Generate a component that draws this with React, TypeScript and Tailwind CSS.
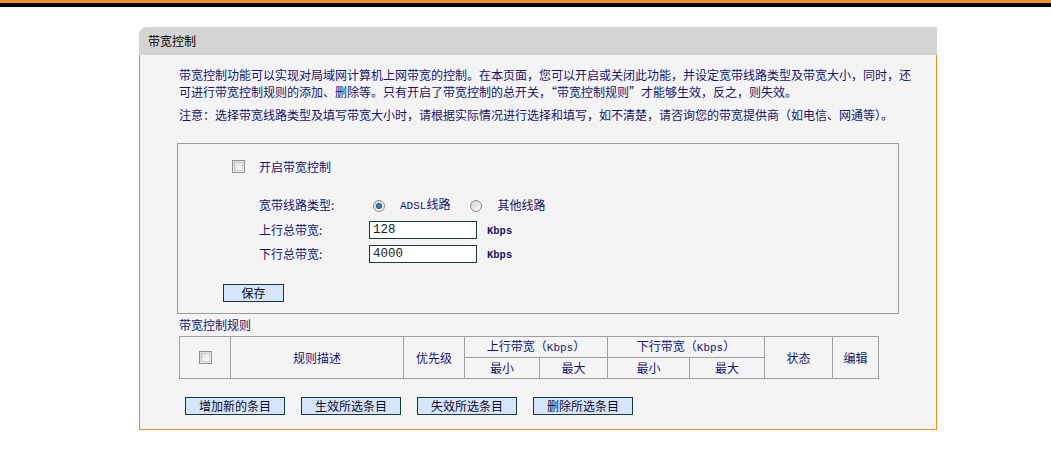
import type { ReactNode } from 'react';

const cjk = { fontFamily: '"Noto Sans CJK SC", "Noto Sans", sans-serif' };
const mono = { fontFamily: '"Liberation Mono", "DejaVu Sans Mono", monospace' };

function Checkbox() {
	return (
		<span className="box-border inline-block h-[13px] w-[13px] border border-[#8f8f8f] bg-gradient-to-br from-[#d8d8d8] to-[#fafafa] p-[1px]">
			<span className="block h-full w-full border border-[#c9c9c9] bg-gradient-to-br from-[#dcdcdc] to-white" />
		</span>
	);
}

function Radio({ checked = false }: { checked?: boolean }) {
	return (
		<span className="box-border inline-flex h-[12px] w-[12px] items-center justify-center rounded-full border border-[#8c8c8c] bg-gradient-to-br from-[#d4d4d4] to-[#fbfbfb]">
			{checked ? (
				<span className="block h-[6px] w-[6px] rounded-full border border-[#0d3c66] bg-[#2f8fd6]" />
			) : null}
		</span>
	);
}

function Btn({ children, className = '' }: { children: ReactNode; className?: string }) {
	return (
		<button
			type="button"
			className={`box-border flex h-[18px] items-center justify-center border border-[#18393a] bg-[#d6e5fa] text-[12px] leading-none text-[#0a0a2a] ${className}`}
		>
			{children}
		</button>
	);
}

function Kbps() {
	return (
		<span className="ml-[10px] mt-[3px] text-[10.5px] font-bold text-[#141460]" style={mono}>
			Kbps
		</span>
	);
}

function Th({
	children,
	className = '',
	rowSpan,
	colSpan,
}: {
	children?: ReactNode;
	className?: string;
	rowSpan?: number;
	colSpan?: number;
}) {
	return (
		<td
			rowSpan={rowSpan}
			colSpan={colSpan}
			className={`h-[21px] border border-[#a0a0a0] p-0 text-center align-middle text-[12px] font-normal leading-none text-[#141470] ${className}`}
		>
			{children}
		</td>
	);
}

export default function App() {
	return (
		<div className="min-h-[471px] bg-white" style={cjk}>
			<div className="h-[3px] bg-[#f0952c]" />
			<div className="h-[4px] bg-black" />

			<div className="ml-[139px] mt-[20px] w-[798px]">
				<div className="flex h-[28px] items-center rounded-tl-[8px] bg-[#d4d4d4] pl-[9px] text-[12px] text-black">
					带宽控制
				</div>

				<div className="border-x border-b border-[#ef8e1c] bg-[#f4f4f4] pb-[14px] pl-[37px] pt-[11px]">
					<div className="ml-[2px] whitespace-nowrap text-[12px] leading-[17px] text-[#14146e]">
						<p>
							带宽控制功能可以实现对局域网计算机上网带宽的控制。在本页面，您可以开启或关闭此功能，并设定宽带线路类型及带宽大小，同时，还
							<br />
							可进行带宽控制规则的添加、删除等。只有开启了带宽控制的总开关，“带宽控制规则”才能够生效，反之，则失效。
						</p>
						<p className="mt-[6px]">
							注意：选择带宽线路类型及填写带宽大小时，请根据实际情况进行选择和填写，如不清楚，请咨询您的带宽提供商（如电信、网通等）。
						</p>
					</div>

					{/* settings box */}
					<div className="mt-[20px] box-border w-[722px] border border-[#9c9c9c] pb-[11px] pt-[16px] text-[12px] text-[#14146e]">
						<div className="ml-[54px] flex h-[13px] items-center">
							<Checkbox />
							<span className="ml-[14px] leading-none">开启带宽控制</span>
						</div>

						<div className="ml-[81px] mt-[23px] flex h-[17px] items-center">
							<span className="w-[110px]">宽带线路类型:</span>
							<span className="ml-[4px] mt-[2px] flex">
								<Radio checked />
							</span>
							<span className="ml-[15px]">
								<span className="text-[11px]" style={mono}>
									ADSL
								</span>
								线路
							</span>
							<span className="ml-[20px] mt-[2px] flex">
								<Radio />
							</span>
							<span className="ml-[15px]">其他线路</span>
						</div>

						<div className="ml-[81px] mt-[8px] flex h-[18px] items-center">
							<span className="w-[110px]">上行总带宽:</span>
							<input
								readOnly
								value="128"
								className="box-border h-[18px] w-[108px] border border-[#183a38] bg-white px-[3px] text-[12.5px] text-[#222] outline-none"
								style={mono}
							/>
							<Kbps />
						</div>

						<div className="ml-[81px] mt-[6px] flex h-[18px] items-center">
							<span className="w-[110px]">下行总带宽:</span>
							<input
								readOnly
								value="4000"
								className="box-border h-[18px] w-[108px] border border-[#183a38] bg-white px-[3px] text-[12.5px] text-[#222] outline-none"
								style={mono}
							/>
							<Kbps />
						</div>

						<div className="ml-[45px] mt-[21px]">
							<Btn className="w-[61px]">保存</Btn>
						</div>
					</div>

					<div className="ml-[2px] mt-[2px] text-[12px] leading-[17px] text-[#14146e]">带宽控制规则</div>

					<table className="ml-[2px] mt-[3px] w-[700px] table-fixed border-collapse">
						<colgroup>
							<col className="w-[51px]" />
							<col className="w-[173px]" />
							<col className="w-[61px]" />
							<col className="w-[75px]" />
							<col className="w-[68px]" />
							<col className="w-[82px]" />
							<col className="w-[75px]" />
							<col className="w-[68px]" />
							<col className="w-[46px]" />
						</colgroup>
						<tbody>
							<tr>
								<Th rowSpan={2}>
									<span className="inline-flex">
										<Checkbox />
									</span>
								</Th>
								<Th rowSpan={2}>规则描述</Th>
								<Th rowSpan={2}>优先级</Th>
								<Th colSpan={2}>
									上行带宽（<span className="text-[11px]" style={mono}>Kbps</span>）
								</Th>
								<Th colSpan={2}>
									下行带宽（<span className="text-[11px]" style={mono}>Kbps</span>）
								</Th>
								<Th rowSpan={2}>状态</Th>
								<Th rowSpan={2}>编辑</Th>
							</tr>
							<tr>
								<Th>最小</Th>
								<Th>最大</Th>
								<Th>最小</Th>
								<Th>最大</Th>
							</tr>
						</tbody>
					</table>

					<div className="ml-[8px] mt-[18px] flex gap-[16px]">
						<Btn className="w-[100px]">增加新的条目</Btn>
						<Btn className="w-[100px]">生效所选条目</Btn>
						<Btn className="w-[100px]">失效所选条目</Btn>
						<Btn className="w-[100px]">删除所选条目</Btn>
					</div>
				</div>
			</div>
		</div>
	);
}
